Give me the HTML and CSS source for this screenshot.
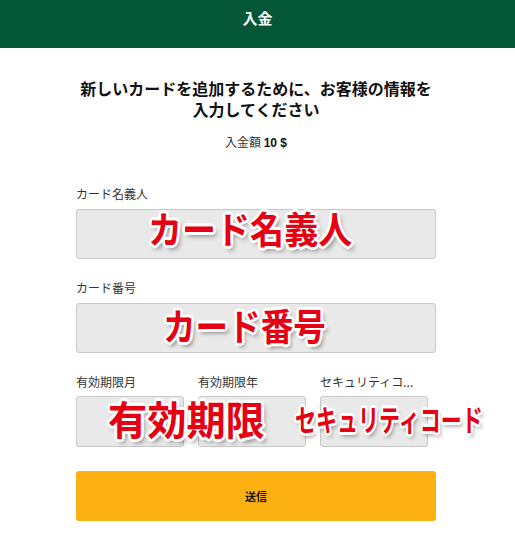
FILE: index.html
```html
<!DOCTYPE html>
<html lang="ja">
<head>
<meta charset="utf-8">
<title>入金</title>
<link rel="stylesheet" href="styles.css">
</head>
<body>
<header class="topbar"><h1 class="topbar-title">入金</h1></header>
<main class="content">
  <h2 class="lead">新しいカードを追加するために、お客様の情報を入力してください</h2>
  <p class="amount">入金額 <b>10 $</b></p>
  <form class="form">
    <div class="field">
      <label class="label">カード名義人</label>
      <div class="input"></div>
    </div>
    <div class="field">
      <label class="label">カード番号</label>
      <div class="input"></div>
    </div>
    <div class="row">
      <div class="field">
        <label class="label">有効期限月</label>
        <div class="input"></div>
      </div>
      <div class="field">
        <label class="label">有効期限年</label>
        <div class="input"></div>
      </div>
      <div class="field">
        <label class="label">セキュリティコ...</label>
        <div class="input"></div>
      </div>
    </div>
    <button type="button" class="submit">送信</button>
  </form>
</main>
<div class="notes">
  <span class="note note-name">カード名義人</span>
  <span class="note note-number">カード番号</span>
  <span class="note note-exp">有効期限</span>
  <span class="note note-cvc">セキュリティコード</span>
</div>
</body>
</html>
```
FILE: styles.css
```css
* { box-sizing: border-box; }
html, body { margin: 0; padding: 0; }
body {
  position: relative;
  width: 515px;
  height: 548px;
  background: #fff;
  font-family: "Noto Sans CJK JP", "Noto Sans", sans-serif;
  color: #222;
  overflow: hidden;
}
.topbar {
  height: 48px;
  background: #035636;
  display: flex;
  align-items: center;
  justify-content: center;
}
.topbar-title {
  margin: 0;
  color: #fff;
  font-size: 15px;
  font-weight: 700;
  line-height: 1;
  margin-top: -13px;
}
.content {
  width: 360px;
  margin-left: 76px;
  padding-top: 30px;
}
.lead {
  margin: 0;
  font-size: 16px;
  font-weight: 700;
  line-height: 21px;
  text-align: center;
  color: #111;
}
.amount {
  margin: 14px 0 0;
  font-size: 12px;
  line-height: 16px;
  text-align: center;
  color: #333;
}
.amount b { font-family: "Liberation Sans", Arial, sans-serif; font-weight: 700; color: #111; }
.form {
  margin-top: 35px;
  display: flex;
  flex-direction: column;
}
.field {
  display: flex;
  flex-direction: column;
  gap: 7px;
  margin-bottom: 21px;
}
.label {
  font-size: 12px;
  line-height: 16px;
  color: #333;
  white-space: nowrap;
}
.input {
  height: 50px;
  background: #e9e9e9;
  border: 1px solid #c9c9c9;
  border-radius: 3px;
}
.row {
  display: grid;
  grid-template-columns: repeat(3, 108px);
  column-gap: 14px;
}
.row .field { margin-bottom: 24px; gap: 6px; }
.row .input { height: 51px; }
.submit {
  height: 50px;
  border: 0;
  border-radius: 3px;
  background: #fdb012;
  font-family: "Noto Sans CJK JP", sans-serif;
  font-size: 11px;
  font-weight: 700;
  color: #111;
  padding: 0;
}
.notes {
  position: absolute;
  inset: 0;
  pointer-events: none;
}
.note {
  position: absolute;
  font-family: "Noto Sans CJK JP", sans-serif;
  font-weight: 700;
  color: #e50012;
  line-height: 1;
  white-space: nowrap;
  transform-origin: 0 0;
  text-shadow:
    2px 0 0 #fff, -2px 0 0 #fff, 0 2px 0 #fff, 0 -2px 0 #fff,
    2px 2px 0 #fff, -2px -2px 0 #fff, 2px -2px 0 #fff, -2px 2px 0 #fff,
    3px 0 0 #fff, -3px 0 0 #fff, 0 3px 0 #fff, 0 -3px 0 #fff,
    3px 4px 5px rgba(0,0,0,.45);
}
.note-name {
  left: 148px;
  top: 210px;
  font-size: 37px;
  transform: scaleX(0.92);
}
.note-number {
  left: 163px;
  top: 307px;
  font-size: 37px;
  transform: scaleX(0.88);
}
.note-exp {
  left: 108px;
  top: 398px;
  font-size: 40px;
  transform: scaleX(0.98);
}
.note-cvc {
  left: 295px;
  top: 403px;
  font-size: 30px;
  transform: scaleX(0.70);
}
```
